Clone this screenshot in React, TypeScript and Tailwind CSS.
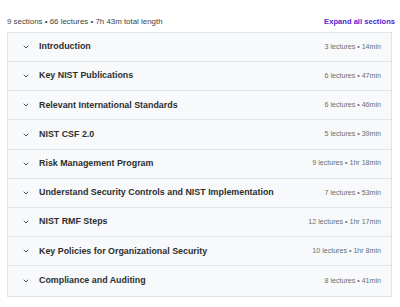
import { ChevronDown } from 'lucide-react';

const sections = [
  { title: 'Introduction', meta: '3 lectures • 14min' },
  { title: 'Key NIST Publications', meta: '6 lectures • 47min' },
  { title: 'Relevant International Standards', meta: '6 lectures • 46min' },
  { title: 'NIST CSF 2.0', meta: '5 lectures • 39min' },
  { title: 'Risk Management Program', meta: '9 lectures • 1hr 18min' },
  { title: 'Understand Security Controls and NIST Implementation', meta: '7 lectures • 53min' },
  { title: 'NIST RMF Steps', meta: '12 lectures • 1hr 17min' },
  { title: 'Key Policies for Organizational Security', meta: '10 lectures • 1hr 8min' },
  { title: 'Compliance and Auditing', meta: '8 lectures • 41min' },
];

export default function App() {
  return (
    <div className="w-[400px] h-[307px] bg-white font-['Liberation_Sans',Arial,sans-serif] text-[#2d2f31]">
      <div className="flex items-end justify-between pl-[7px] pr-[5px] pt-[16px] pb-[4px]">
        <span className="text-[7.9px] text-[#3e4143]">9 sections • 66 lectures • 7h 43m total length</span>
        <button type="button" className="text-[7.6px] font-bold text-[#5624d0]">
          Expand all sections
        </button>
      </div>
      <div className="ml-[7px] mr-[8px] border border-[#e1e4e7]">
        {sections.map((s, i) => (
          <div
            key={s.title}
            className={
              'flex items-center justify-between h-[29.2px] bg-[#f7f9fa] pl-[14px] pr-[10px] ' +
              (i < sections.length - 1 ? 'border-b border-[#e1e4e7]' : '')
            }
          >
            <div className="flex items-center gap-[9px]">
              <ChevronDown className="w-[8px] h-[8px] text-[#2d2f31]" strokeWidth={2.5} />
              <span className="text-[8.9px] font-bold">{s.title}</span>
            </div>
            <span className="text-[7.1px] text-[#6a6f73]">{s.meta}</span>
          </div>
        ))}
      </div>
    </div>
  );
}
